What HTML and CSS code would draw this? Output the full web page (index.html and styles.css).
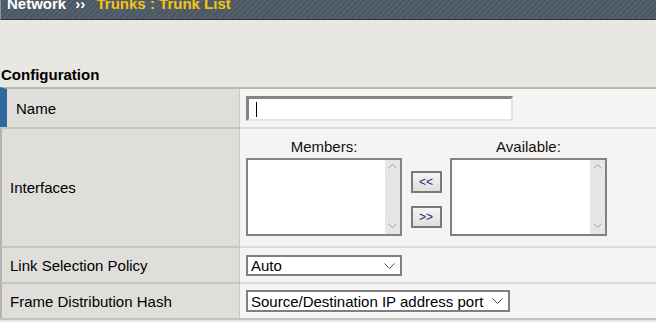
FILE: index.html
```html
<!DOCTYPE html>
<html lang="en">

<head>
  <meta charset="UTF-8" />
  <title>Network :: Trunks : Trunk List</title>
  <link rel="stylesheet" href="styles.css">
</head>

<body>

  <div class="topbar">
    <div class="crumbs">
      <span class="crumb">Network</span>
      <span class="crumb-sep">››</span>
      <span class="crumb-current">Trunks : Trunk List</span>
    </div>
  </div>

  <div class="page">
    <h2 class="section-title">Configuration</h2>

    <div class="config">
      <div class="label label-required">Name</div>
      <div class="value">
        <span class="name-field">
          <input class="text-input" type="text" />
          <span class="caret"></span>
        </span>
      </div>

      <div class="label">Interfaces</div>
      <div class="value">
        <div class="picker">
          <div class="picker-title">Members:</div>
          <div></div>
          <div class="picker-title">Available:</div>

          <div class="listbox">
            <div class="scrollbar">
              <svg width="9" height="5" viewBox="0 0 9 5"><path d="M0.5 4.5 L4.5 0.5 L8.5 4.5" /></svg>
              <svg width="9" height="5" viewBox="0 0 9 5"><path d="M0.5 0.5 L4.5 4.5 L8.5 0.5" /></svg>
            </div>
          </div>
          <div class="move-buttons">
            <button class="move-btn">&lt;&lt;</button>
            <button class="move-btn">&gt;&gt;</button>
          </div>
          <div class="listbox">
            <div class="scrollbar">
              <svg width="9" height="5" viewBox="0 0 9 5"><path d="M0.5 4.5 L4.5 0.5 L8.5 4.5" /></svg>
              <svg width="9" height="5" viewBox="0 0 9 5"><path d="M0.5 0.5 L4.5 4.5 L8.5 0.5" /></svg>
            </div>
          </div>
        </div>
      </div>

      <div class="label">Link Selection Policy</div>
      <div class="value">
        <span class="select-wrap">
          <select class="select select-short">
            <option>Auto</option>
          </select>
          <svg class="select-arrow" width="11" height="6" viewBox="0 0 11 6"><path d="M0.5 0.5 L5.5 5.5 L10.5 0.5" /></svg>
        </span>
      </div>

      <div class="label">Frame Distribution Hash</div>
      <div class="value">
        <span class="select-wrap">
          <select class="select select-long">
            <option>Source/Destination IP address port</option>
          </select>
          <svg class="select-arrow" width="11" height="6" viewBox="0 0 11 6"><path d="M0.5 0.5 L5.5 5.5 L10.5 0.5" /></svg>
        </span>
      </div>
    </div>
  </div>

</body>

</html>
```

FILE: styles.css
```css
body {
  font-family: 'Liberation Sans', Arial, sans-serif;
  font-size: 15px;
  color: #000;
  background: #e8e7e2;
  margin: 0;
  padding: 0;
}

.topbar {
  height: 19px;
  overflow: hidden;
  background: repeating-linear-gradient(135deg, #4c5764 0 2px, #55606d 2px 4px);
  border-bottom: 1px solid #2f3338;
  border-left: 1px solid #8b949d;
}

.crumbs {
  margin-top: -6px;
  padding-left: 6px;
  line-height: 19px;
  font-weight: bold;
  white-space: nowrap;
}

.crumb,
.crumb-sep {
  color: #fff;
}

.crumb-sep {
  margin: 0 7px 0 5px;
}

.crumb-current {
  color: #f6c40f;
}

.section-title {
  font-size: 15px;
  line-height: 17px;
  margin: 46px 0 4px 1px;
}

.config {
  display: grid;
  grid-template-columns: 240px 1fr;
  grid-template-rows: 40px 119px 36px 36px;
  border-bottom: 2px solid #c3c2be;
}

.label,
.value {
  box-sizing: border-box;
  display: flex;
  align-items: center;
  border-top: 2px solid #d4d3cf;
}

.label {
  background: #dfdedb;
  border-left: 2px solid #b4b3af;
  border-right: 1px solid #c9c8c4;
  border-top-color: #c6c5c1;
  padding-left: 8px;
}

.label-required {
  border-left: 7px solid #2f6a9f;
  padding-left: 9px;
}

.value {
  background: #f5f4f2;
  padding-left: 6px;
  border-top-color: #dddcd8;
}

.config > div:nth-child(-n+2) {
  border-top: 2px solid #b9b8b4;
}

.name-field {
  position: relative;
  display: inline-block;
}

.text-input {
  box-sizing: border-box;
  display: block;
  width: 267px;
  height: 25px;
  margin: 0;
  border-style: solid;
  border-width: 3px 2px 2px 3px;
  border-color: #868686 #e4e4e4 #e4e4e4 #868686;
  background: #fff;
  outline: none;
}

.caret {
  position: absolute;
  left: 10px;
  top: 6px;
  width: 1px;
  height: 15px;
  background: #000;
}

.picker {
  display: grid;
  grid-template-columns: 156px 48px 157px;
  row-gap: 3px;
  margin-top: -2px;
}

.picker-title {
  text-align: center;
  line-height: 17px;
  color: #111;
}

.listbox {
  box-sizing: border-box;
  height: 78px;
  background: #fff;
  border: 2px solid #828282;
  display: flex;
  justify-content: flex-end;
}

.scrollbar {
  width: 15px;
  background: #e6e6e6;
  display: flex;
  flex-direction: column;
  justify-content: space-between;
  align-items: center;
  padding: 4px 0 6px;
  box-sizing: border-box;
}

.scrollbar path {
  fill: none;
  stroke: #a2a2a2;
}

.move-buttons {
  display: flex;
  flex-direction: column;
  align-items: center;
  gap: 13px;
  padding-top: 13px;
}

.move-btn {
  box-sizing: border-box;
  width: 31px;
  height: 22px;
  padding: 0;
  font-family: 'Liberation Sans', Arial, sans-serif;
  font-size: 12px;
  color: #1b2a6b;
  background: linear-gradient(#f4f4f4, #dedede);
  border: 2px solid #797979;
  cursor: pointer;
}

.select-wrap {
  position: relative;
  display: inline-block;
}

.select {
  appearance: none;
  box-sizing: border-box;
  display: block;
  height: 21px;
  margin: 0;
  padding: 0 0 0 3px;
  font-family: 'Liberation Sans', Arial, sans-serif;
  font-size: 15px;
  color: #000;
  background: #fff;
  border: 2px solid #7f7f7f;
  border-radius: 0;
}

.select-short {
  width: 156px;
}

.select-long {
  width: 264px;
  height: 22px;
}

.select-arrow {
  position: absolute;
  right: 7px;
  top: 8px;
  pointer-events: none;
}

.select-arrow path {
  fill: none;
  stroke: #4a4a4a;
}
```
